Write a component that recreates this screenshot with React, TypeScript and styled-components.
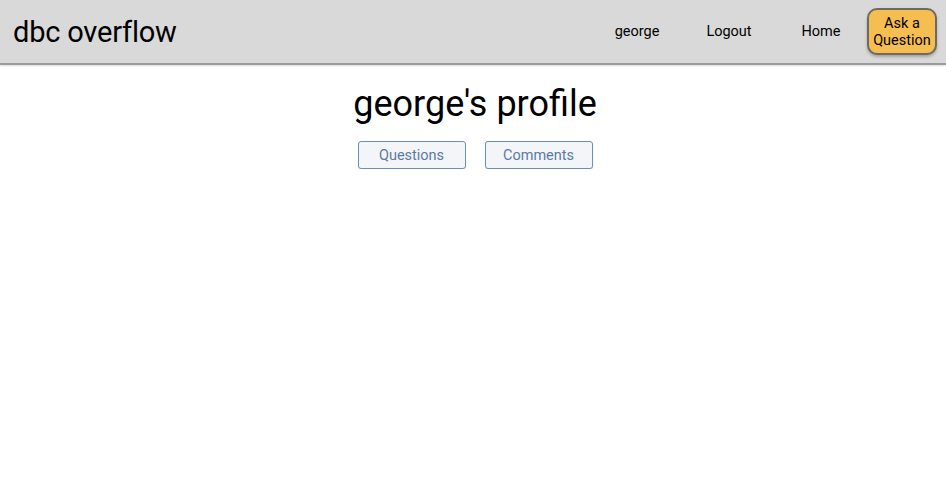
import React from "react";
import styled, { createGlobalStyle } from "styled-components";

const Global = createGlobalStyle`
  html, body { margin: 0; padding: 0; background: #fff; }
  body { font-family: Roboto, "Liberation Sans", sans-serif; color: #000; }
`;

const Header = styled.header`
  height: 63px;
  background: #d9d9d9;
  border-bottom: 2px solid #9a9a9a;
  box-shadow: 0 1px 2px rgba(0,0,0,0.15);
  display: flex;
  align-items: center;
  padding: 0 9px 0 13px;
  box-sizing: content-box;
`;

const Brand = styled.div`
  font-size: 29px;
  flex: 1;
  letter-spacing: -0.2px;
`;

const Nav = styled.nav`
  display: flex;
  align-items: center;
`;

const NavLink = styled.a<{ $w: number }>`
  font-size: 14.5px;
  width: ${(p) => p.$w}px;
  text-align: center;
  color: #000;
  text-decoration: none;
`;

const AskButton = styled.button`
  width: 70px;
  height: 47px;
  margin-left: 0;
  background: #f6be50;
  border: 2px solid #6e6a62;
  border-radius: 10px;
  box-shadow: 0 2px 3px rgba(0,0,0,0.25);
  font-family: inherit;
  font-size: 14.5px;
  line-height: 17px;
  color: #000;
  padding: 0;
`;

const Main = styled.main`
  display: flex;
  flex-direction: column;
  align-items: center;
  padding-left: 4px;
`;

const Title = styled.h1`
  font-size: 36px;
  font-weight: 400;
  margin: 18px 0 0;
  line-height: 42px;
`;

const Tabs = styled.div`
  display: flex;
  gap: 19px;
  margin-top: 16px;
`;

const Tab = styled.button`
  width: 108px;
  height: 28px;
  background: #f3f5f8;
  border: 1px solid #6a8fb8;
  border-radius: 3px;
  color: #5a7ba4;
  font-family: inherit;
  font-size: 14.5px;
  box-shadow: 0 1px 1px rgba(0,0,0,0.1);
  padding: 0;
`;

export default function App() {
  return (
    <>
      <Global />
      <Header>
        <Brand>dbc overflow</Brand>
        <Nav>
          <NavLink $w={92}>george</NavLink>
          <NavLink $w={92}>Logout</NavLink>
          <NavLink $w={92}>Home</NavLink>
          <AskButton>Ask a<br />Question</AskButton>
        </Nav>
      </Header>
      <Main>
        <Title>george's profile</Title>
        <Tabs>
          <Tab>Questions</Tab>
          <Tab>Comments</Tab>
        </Tabs>
      </Main>
    </>
  );
}
